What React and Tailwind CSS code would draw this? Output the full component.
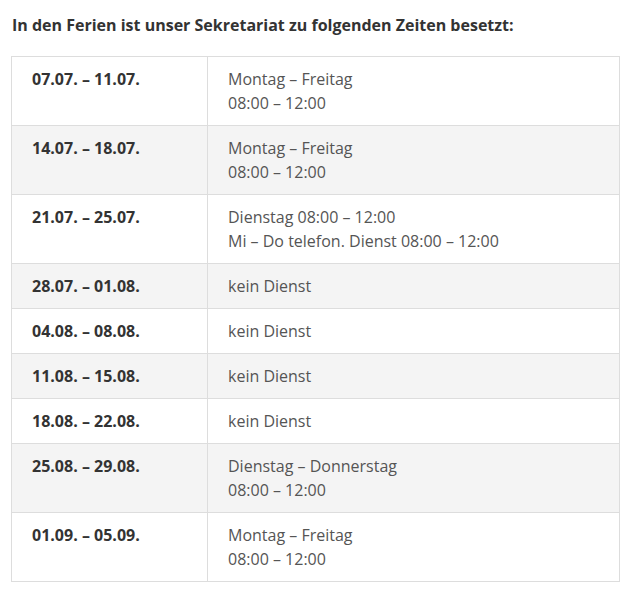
import React from "react";

const rows = [
  { dates: "07.07. – 11.07.", lines: ["Montag – Freitag", "08:00 – 12:00"] },
  { dates: "14.07. – 18.07.", lines: ["Montag – Freitag", "08:00 – 12:00"] },
  { dates: "21.07. – 25.07.", lines: ["Dienstag 08:00 – 12:00", "Mi – Do telefon. Dienst 08:00 – 12:00"] },
  { dates: "28.07. – 01.08.", lines: ["kein Dienst"] },
  { dates: "04.08. – 08.08.", lines: ["kein Dienst"] },
  { dates: "11.08. – 15.08.", lines: ["kein Dienst"] },
  { dates: "18.08. – 22.08.", lines: ["kein Dienst"] },
  { dates: "25.08. – 29.08.", lines: ["Dienstag – Donnerstag", "08:00 – 12:00"] },
  { dates: "01.09. – 05.09.", lines: ["Montag – Freitag", "08:00 – 12:00"] },
];

const App = () => {
  return (
    <div
      className="bg-white min-h-[596px] pl-[11px] pr-[21px] pt-[13px] text-[16px] leading-[24px] text-[#555]"
      style={{ fontFamily: '"Open Sans", "Liberation Sans", sans-serif' }}
    >
      <h2 className="pl-px font-bold text-[#333] text-[16px] leading-[24px]">
        In den Ferien ist unser Sekretariat zu folgenden Zeiten besetzt:
      </h2>

      <table className="mt-[19px] w-[609px] border-collapse border border-[#ddd]">
        <tbody>
          {rows.map((row, i) => (
            <tr key={row.dates} className={i % 2 === 1 ? "bg-[#f4f4f4]" : "bg-white"}>
              <td className="w-[196px] border border-[#ddd] px-5 pt-[10px] pb-[10px] align-top font-bold text-[#333]">
                {row.dates}
              </td>
              <td className="border border-[#ddd] px-5 pt-[10px] pb-[10px] align-top">
                {row.lines.map((line) => (
                  <div key={line}>{line}</div>
                ))}
              </td>
            </tr>
          ))}
        </tbody>
      </table>
    </div>
  );
};

export default App;
